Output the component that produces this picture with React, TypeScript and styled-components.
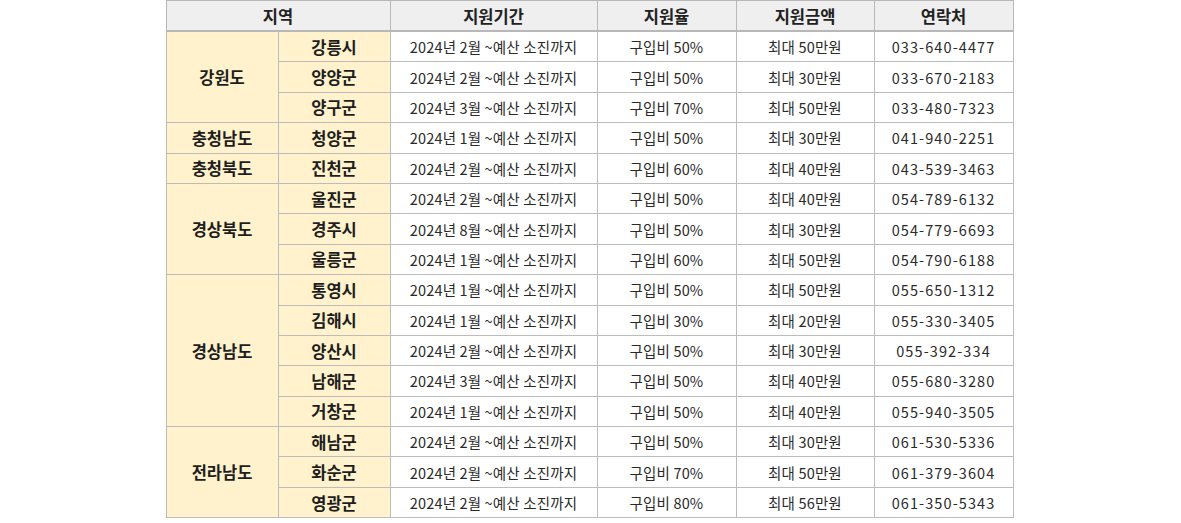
import React from 'react';
import styled, { createGlobalStyle } from 'styled-components';

const GlobalStyle = createGlobalStyle`
    html, body {
        margin: 0;
        padding: 0;
        background: #ffffff;
    }
    body {
        font-family: 'Noto Sans CJK KR', 'Noto Sans', sans-serif;
        color: #222;
    }
`;

interface SupportRow {
    city: string;
    period: string;
    rate: string;
    amount: string;
    phone: string;
}

interface RegionGroup {
    region: string;
    rows: Array<SupportRow>;
}

const data: Array<RegionGroup> = [
    {
        region: '강원도',
        rows: [
            { city: '강릉시', period: '2024년 2월 ~예산 소진까지', rate: '구입비 50%', amount: '최대 50만원', phone: '033-640-4477' },
            { city: '양양군', period: '2024년 2월 ~예산 소진까지', rate: '구입비 50%', amount: '최대 30만원', phone: '033-670-2183' },
            { city: '양구군', period: '2024년 3월 ~예산 소진까지', rate: '구입비 70%', amount: '최대 50만원', phone: '033-480-7323' },
        ],
    },
    {
        region: '충청남도',
        rows: [{ city: '청양군', period: '2024년 1월 ~예산 소진까지', rate: '구입비 50%', amount: '최대 30만원', phone: '041-940-2251' }],
    },
    {
        region: '충청북도',
        rows: [{ city: '진천군', period: '2024년 2월 ~예산 소진까지', rate: '구입비 60%', amount: '최대 40만원', phone: '043-539-3463' }],
    },
    {
        region: '경상북도',
        rows: [
            { city: '울진군', period: '2024년 2월 ~예산 소진까지', rate: '구입비 50%', amount: '최대 40만원', phone: '054-789-6132' },
            { city: '경주시', period: '2024년 8월 ~예산 소진까지', rate: '구입비 50%', amount: '최대 30만원', phone: '054-779-6693' },
            { city: '울릉군', period: '2024년 1월 ~예산 소진까지', rate: '구입비 60%', amount: '최대 50만원', phone: '054-790-6188' },
        ],
    },
    {
        region: '경상남도',
        rows: [
            { city: '통영시', period: '2024년 1월 ~예산 소진까지', rate: '구입비 50%', amount: '최대 50만원', phone: '055-650-1312' },
            { city: '김해시', period: '2024년 1월 ~예산 소진까지', rate: '구입비 30%', amount: '최대 20만원', phone: '055-330-3405' },
            { city: '양산시', period: '2024년 2월 ~예산 소진까지', rate: '구입비 50%', amount: '최대 30만원', phone: '055-392-334' },
            { city: '남해군', period: '2024년 3월 ~예산 소진까지', rate: '구입비 50%', amount: '최대 40만원', phone: '055-680-3280' },
            { city: '거창군', period: '2024년 1월 ~예산 소진까지', rate: '구입비 50%', amount: '최대 40만원', phone: '055-940-3505' },
        ],
    },
    {
        region: '전라남도',
        rows: [
            { city: '해남군', period: '2024년 2월 ~예산 소진까지', rate: '구입비 50%', amount: '최대 30만원', phone: '061-530-5336' },
            { city: '화순군', period: '2024년 2월 ~예산 소진까지', rate: '구입비 70%', amount: '최대 50만원', phone: '061-379-3604' },
            { city: '영광군', period: '2024년 2월 ~예산 소진까지', rate: '구입비 80%', amount: '최대 56만원', phone: '061-350-5343' },
        ],
    },
];

const Page = styled.div`
    display: flex;
    justify-content: center;
    padding-right: 2px;
`;

const Table = styled.table`
    border-collapse: collapse;
    table-layout: fixed;
    width: 847px;
    border: 1px solid #b8b8b8;
`;

const HeaderCell = styled.th`
    height: 29px;
    padding: 0;
    background-color: #efefef;
    border: 1px solid #b8b8b8;
    border-bottom-width: 2px;
    font-size: 16.5px;
    font-weight: 700;
    color: #222;
    text-align: center;
`;

const Cell = styled.td<{ $wide?: boolean }>`
    height: 29.4px;
    padding: 0;
    border: 1px solid #bcbcbc;
    font-size: 14.5px;
    font-weight: 400;
    letter-spacing: ${({ $wide }) => ($wide ? '1.1px' : '0.15px')};
    color: #2a2a2a;
    text-align: center;
    white-space: nowrap;
    background-color: #ffffff;
`;

const NameCell = styled(Cell)`
    background-color: #fff2cc;
    font-size: 16.5px;
    font-weight: 700;
    letter-spacing: 0;
    color: #1e1e1e;
`;

const App: React.FC = () => {
    return (
        <Page>
            <GlobalStyle />
            <Table>
                <colgroup>
                    <col style={{ width: 112 }} />
                    <col style={{ width: 112 }} />
                    <col style={{ width: 207 }} />
                    <col style={{ width: 139 }} />
                    <col style={{ width: 138 }} />
                    <col style={{ width: 139 }} />
                </colgroup>
                <thead>
                    <tr>
                        <HeaderCell colSpan={2}>지역</HeaderCell>
                        <HeaderCell>지원기간</HeaderCell>
                        <HeaderCell>지원율</HeaderCell>
                        <HeaderCell>지원금액</HeaderCell>
                        <HeaderCell>연락처</HeaderCell>
                    </tr>
                </thead>
                <tbody>
                    {data.map((group) =>
                        group.rows.map((row, index) => (
                            <tr key={group.region + row.city}>
                                {index === 0 && <NameCell rowSpan={group.rows.length}>{group.region}</NameCell>}
                                <NameCell>{row.city}</NameCell>
                                <Cell>{row.period}</Cell>
                                <Cell>{row.rate}</Cell>
                                <Cell>{row.amount}</Cell>
                                <Cell $wide>{row.phone}</Cell>
                            </tr>
                        )),
                    )}
                </tbody>
            </Table>
        </Page>
    );
};

export default App;
